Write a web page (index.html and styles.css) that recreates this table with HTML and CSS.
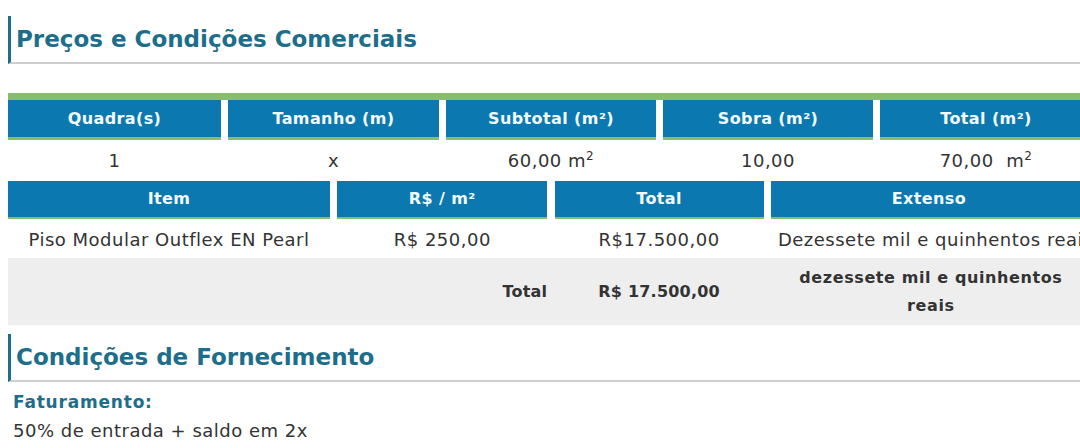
FILE: index.html
```html
<!DOCTYPE html>
<html lang="pt-BR">
<head>
<meta charset="utf-8">
<title>Preços e Condições Comerciais</title>
<link rel="stylesheet" href="styles.css">
</head>
<body>
<div class="page">
  <h2 class="section-title first">Preços e Condições Comerciais</h2>

  <div class="grid5 table-top">
    <div class="th">Quadra(s)</div>
    <div class="th">Tamanho (m)</div>
    <div class="th">Subtotal (m²)</div>
    <div class="th">Sobra (m²)</div>
    <div class="th">Total (m²)</div>
    <div class="td">1</div>
    <div class="td">x</div>
    <div class="td">60,00 m<sup>2</sup></div>
    <div class="td">10,00</div>
    <div class="td">70,00&nbsp; m<sup>2</sup></div>
  </div>

  <div class="grid4">
    <div class="th th2">Item</div>
    <div class="th th2">R$ / m²</div>
    <div class="th th2">Total</div>
    <div class="th th2">Extenso</div>
    <div class="td td2">Piso Modular Outflex EN Pearl</div>
    <div class="td td2">R$ 250,00</div>
    <div class="td td2">R$17.500,00</div>
    <div class="td td2 nowrap">Dezessete mil e quinhentos reais</div>
  </div>

  <div class="grid4 total-row">
    <div class="tt"></div>
    <div class="tt tt-label">Total</div>
    <div class="tt">R$ 17.500,00</div>
    <div class="tt tt-ext">dezessete mil e quinhentos reais</div>
  </div>

  <h2 class="section-title second">Condições de Fornecimento</h2>
  <div class="cond">
    <div class="cond-label">Faturamento:</div>
    <div class="cond-text">50% de entrada + saldo em 2x</div>
  </div>
</div>
</body>
</html>
```

FILE: styles.css
```css
html, body {
  margin: 0;
  padding: 0;
  overflow: hidden;
  background: #ffffff;
}
body {
  font-family: "DejaVu Sans", "Open Sans", sans-serif;
  color: #333333;
}
.page {
  width: 1094px;
  padding: 16px 0 0 8px;
}
.section-title {
  margin: 0;
  font-size: 23px;
  font-weight: 700;
  color: #1d6e8a;
  border-left: 3px solid #1d6e8a;
  border-bottom: 2px solid #cfcfcf;
  height: 46px;
  line-height: 46px;
  padding-left: 5px;
  box-sizing: content-box;
}
.section-title.second {
  margin-top: 9px;
}
.grid5 {
  display: grid;
  grid-template-columns: 213px 211px 210px 210px 212px;
  column-gap: 7px;
}
.table-top {
  margin-top: 29px;
  border-top: 7px solid #86be6e;
}
.grid4 {
  display: grid;
  grid-template-columns: 322px 210px 209px 316px;
  column-gap: 7.3px;
}
.th {
  background: #0b78b0;
  color: #f2fbff;
  font-weight: 700;
  font-size: 16px;
  letter-spacing: 0.4px;
  text-align: center;
  height: 37px;
  line-height: 37px;
  border-bottom: 3px solid #86be6e;
}
.th2 {
  height: 36px;
  line-height: 36px;
  border-bottom-width: 2px;
}
.td {
  font-size: 18px;
  letter-spacing: 0.5px;
  text-align: center;
  height: 41px;
  line-height: 41px;
  color: #333333;
}
.td sup {
  font-size: 12px;
  line-height: 0;
  vertical-align: 7px;
}
.td2 {
  height: 39px;
  line-height: 42px;
}
.nowrap {
  white-space: nowrap;
  text-align: left;
  padding-left: 7px;
}
.total-row {
  background: #eeeeee;
  height: 67px;
  align-items: center;
}
.tt {
  font-size: 16px;
  font-weight: 700;
  letter-spacing: 0.2px;
  text-align: center;
  color: #333333;
}
.tt-label {
  text-align: right;
}
.tt-ext {
  line-height: 28px;
  letter-spacing: 0.6px;
  padding: 0 16px 0 20px;
}
.cond {
  padding-left: 5px;
  padding-top: 7px;
}
.cond-label {
  font-size: 17px;
  font-weight: 700;
  letter-spacing: 0.8px;
  color: #1d6e8a;
  line-height: 26px;
}
.cond-text {
  font-size: 18px;
  letter-spacing: 0.5px;
  line-height: 32px;
  color: #333333;
}
```
